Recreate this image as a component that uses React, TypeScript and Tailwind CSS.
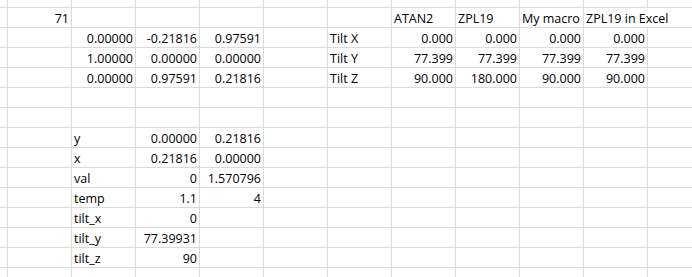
const ROWS = 14;
const COLS = 11;

type Cell = { text: string; align?: 'left' | 'right'; overflow?: boolean };

// sheet contents, keyed by "row,col" (1-based, after the partial top row / left column)
const CELLS: Record<string, Cell> = {
  '1,1': { text: '71', align: 'right' },
  '1,7': { text: 'ATAN2' },
  '1,8': { text: 'ZPL19' },
  '1,9': { text: 'My macro' },
  '1,10': { text: 'ZPL19 in Excel', overflow: true },

  '2,2': { text: '0.00000', align: 'right' },
  '2,3': { text: '-0.21816', align: 'right' },
  '2,4': { text: '0.97591', align: 'right' },
  '2,6': { text: 'Tilt X' },
  '2,7': { text: '0.000', align: 'right' },
  '2,8': { text: '0.000', align: 'right' },
  '2,9': { text: '0.000', align: 'right' },
  '2,10': { text: '0.000', align: 'right' },

  '3,2': { text: '1.00000', align: 'right' },
  '3,3': { text: '0.00000', align: 'right' },
  '3,4': { text: '0.00000', align: 'right' },
  '3,6': { text: 'Tilt Y' },
  '3,7': { text: '77.399', align: 'right' },
  '3,8': { text: '77.399', align: 'right' },
  '3,9': { text: '77.399', align: 'right' },
  '3,10': { text: '77.399', align: 'right' },

  '4,2': { text: '0.00000', align: 'right' },
  '4,3': { text: '0.97591', align: 'right' },
  '4,4': { text: '0.21816', align: 'right' },
  '4,6': { text: 'Tilt Z' },
  '4,7': { text: '90.000', align: 'right' },
  '4,8': { text: '180.000', align: 'right' },
  '4,9': { text: '90.000', align: 'right' },
  '4,10': { text: '90.000', align: 'right' },

  '7,2': { text: 'y' },
  '7,3': { text: '0.00000', align: 'right' },
  '7,4': { text: '0.21816', align: 'right' },
  '8,2': { text: 'x' },
  '8,3': { text: '0.21816', align: 'right' },
  '8,4': { text: '0.00000', align: 'right' },
  '9,2': { text: 'val' },
  '9,3': { text: '0', align: 'right' },
  '9,4': { text: '1.570796', align: 'right' },
  '10,2': { text: 'temp' },
  '10,3': { text: '1.1', align: 'right' },
  '10,4': { text: '4', align: 'right' },
  '11,2': { text: 'tilt_x' },
  '11,3': { text: '0', align: 'right' },
  '12,2': { text: 'tilt_y' },
  '12,3': { text: '77.39931', align: 'right' },
  '13,2': { text: 'tilt_z' },
  '13,3': { text: '90', align: 'right' },
};

export default function App() {
  const rows = Array.from({ length: ROWS + 1 }, (_, i) => i);
  const cols = Array.from({ length: COLS + 1 }, (_, i) => i);

  return (
    <div className="w-[692px] h-[277px] overflow-hidden bg-white">
      <div
        className="grid grid-cols-[8px_repeat(11,64px)] grid-rows-[8px_repeat(14,20px)] text-[12.5px] text-black"
        style={{ fontFamily: '"Open Sans", "Liberation Sans", sans-serif' }}
      >
        {rows.map((r) =>
          cols.map((c) => {
            const cell = CELLS[`${r},${c}`];
            return (
              <div
                key={`${r}-${c}`}
                className={`relative flex items-end border-b border-[#dadada] ${
                  cell?.overflow ? 'z-10 border-r-0 overflow-visible' : 'border-r overflow-hidden'
                } ${cell?.align === 'right' ? 'justify-end pr-[2px]' : 'justify-start pl-[2px]'}`}
              >
                {cell && <span className="whitespace-nowrap leading-[16px]">{cell.text}</span>}
              </div>
            );
          })
        )}
      </div>
    </div>
  );
}
